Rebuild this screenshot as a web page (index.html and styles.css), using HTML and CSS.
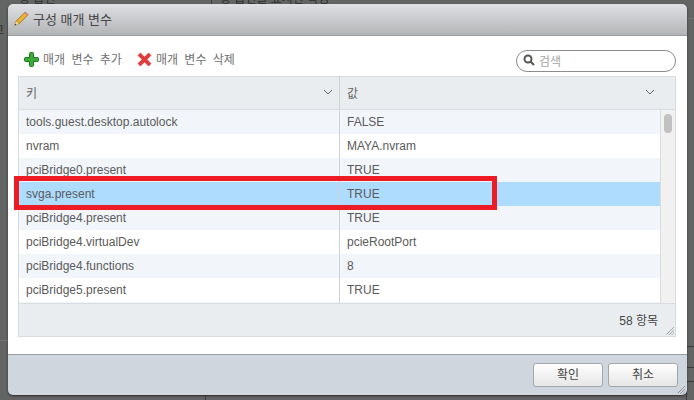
FILE: index.html
```html
<!DOCTYPE html>
<html lang="ko">
<head>
<meta charset="utf-8">
<title>구성 매개 변수</title>
<link rel="stylesheet" href="styles.css">
</head>
<body>
<div class="backdrop">
  <span class="bg-text bg-a">장 옵션</span>
  <span class="bg-text bg-b">장 옵션을 표시한 특정</span>
  <span class="bg-text bg-c">고</span>
  <span class="bg-line bg-v1"></span>
  <span class="bg-line bg-v2"></span>
  <span class="bg-rule bg-r1"></span>
  <span class="bg-rule bg-r2"></span>
  <span class="bg-box bg-b1"></span>
  <span class="bg-box bg-b2"></span>
</div>
<div class="dialog">
  <header class="title">
    <svg class="pencil" width="15" height="15" viewBox="0 0 15 15">
      <path d="M.8 14.200l1-3.700L11.300.9l2.800 2.800-9.600 9.600z" fill="#f0b32e" stroke="#7d6020" stroke-width=".7"/>
      <path d="M3 9.300l2.700 2.700" stroke="#c98a1c" stroke-width=".8"/>
      <path d="M.8 14.200l1-3.700 2.700 2.800z" fill="#f3e2bd"/>
      <path d="M.8 14.200l.5-1.700 1.200 1.200z" fill="#333"/>
      <path d="M11.300.9l2.800 2.800-1.300 1.300L10 2.200z" fill="#d98a7a"/>
    </svg>
    <span>구성 매개 변수</span>
  </header>
  <main class="body">
    <div class="toolbar">
      <div class="action">
        <svg width="15" height="15" viewBox="0 0 15 15"><path d="M5.500 1.500a1 1 0 0 1 1-1h2a1 1 0 0 1 1 1v4h4a1 1 0 0 1 1 1v2a1 1 0 0 1-1 1h-4v4a1 1 0 0 1-1 1h-2a1 1 0 0 1-1-1v-4h-4a1 1 0 0 1-1-1v-2a1 1 0 0 1 1-1h4z" fill="#3cab3a" stroke="#187a1f" stroke-width="1"/></svg>
        <span>매개 변수 추가</span>
      </div>
      <div class="action">
        <svg width="15" height="15" viewBox="0 0 15 15"><path d="M1 3.400L3.400 1l4.100 4.100L11.600 1 14 3.400 9.900 7.500 14 11.600 11.600 14 7.500 9.900 3.400 14 1 11.600l4.100-4.100z" fill="#e23b3b" stroke="#c42a2a" stroke-width=".6"/></svg>
        <span>매개 변수 삭제</span>
      </div>
      <div class="search">
        <svg width="12" height="12" viewBox="0 0 12 12"><circle cx="5" cy="5" r="3.500" fill="none" stroke="#555" stroke-width="2"/><path d="M7.500 7.500l3.500 3.500" stroke="#555" stroke-width="2"/></svg>
        <span>검색</span>
      </div>
    </div>
    <section class="grid">
      <div class="grid-head">
        <div class="head-cell col-key"><span>키</span><svg class="chev" width="10" height="6" viewBox="0 0 10 6"><path d="M1 1l4 4 4-4" fill="none" stroke="#666" stroke-width="1"/></svg></div>
        <div class="head-cell col-val"><span>값</span><svg class="chev" width="10" height="6" viewBox="0 0 10 6"><path d="M1 1l4 4 4-4" fill="none" stroke="#666" stroke-width="1"/></svg></div>
      </div>
      <div class="grid-main">
        <div class="rows">
          <div class="row odd"><div class="cell col-key">tools.guest.desktop.autolock</div><div class="cell col-val">FALSE</div></div>
          <div class="row"><div class="cell col-key">nvram</div><div class="cell col-val">MAYA.nvram</div></div>
          <div class="row odd"><div class="cell col-key">pciBridge0.present</div><div class="cell col-val">TRUE</div></div>
          <div class="row selected"><div class="cell col-key">svga.present</div><div class="cell col-val">TRUE</div></div>
          <div class="row odd"><div class="cell col-key">pciBridge4.present</div><div class="cell col-val">TRUE</div></div>
          <div class="row"><div class="cell col-key">pciBridge4.virtualDev</div><div class="cell col-val">pcieRootPort</div></div>
          <div class="row odd"><div class="cell col-key">pciBridge4.functions</div><div class="cell col-val">8</div></div>
          <div class="row"><div class="cell col-key">pciBridge5.present</div><div class="cell col-val">TRUE</div></div>
          <div class="row odd partial"><div class="cell col-key"></div><div class="cell col-val"></div></div>
        </div>
        <div class="scrollbar"><div class="thumb"></div></div>
      </div>
      <div class="grid-foot">
        <span>58 항목</span>
        <svg class="grip" width="8" height="8" viewBox="0 0 8 8"><path d="M7.500 .5L.5 7.500M7.500 3.500L3.500 7.500M7.500 6L6 7.500" stroke="#666" stroke-width="1" stroke-dasharray="1 .6"/></svg>
      </div>
    </section>
  </main>
  <footer class="foot">
    <button class="btn">확인</button>
    <button class="btn">취소</button>
    <svg class="grip dialog-grip" width="8" height="8" viewBox="0 0 8 8"><path d="M7.500 .5L.5 7.500M7.500 3.500L3.500 7.500M7.500 6L6 7.500" stroke="#666" stroke-width="1" stroke-dasharray="1 .6"/></svg>
  </footer>
</div>
<div class="highlight"></div>
</body>
</html>
```

FILE: styles.css
```css
* { box-sizing: border-box; }
html, body { margin: 0; height: 100%; }
body {
  width: 694px;
  height: 400px;
  overflow: hidden;
  position: relative;
  background: #636464;
  font-family: "Liberation Sans", "Noto Sans CJK KR", sans-serif;
  font-size: 12px;
  color: #565656;
  padding: 4px 7px 5px 8px;
}
.backdrop { position: absolute; inset: 0; overflow: hidden; }
.bg-text { position: absolute; color: #2e2e2e; font-size: 12px; line-height: 14px; white-space: nowrap; }
.bg-a { left: 19px; top: -8px; }
.bg-b { left: 220px; top: -8px; }
.bg-c { left: -7px; top: 24px; }
.bg-line { position: absolute; background: #3c3c3c; width: 1px; }
.bg-v1 { left: 211px; top: 0; height: 5px; }
.bg-v2 { left: 205px; top: 395px; height: 5px; }
.bg-rule { position: absolute; background: #707070; height: 1px; }
.bg-r1 { left: 0; top: 340px; width: 8px; }
.bg-r2 { left: 686px; top: 18px; width: 8px; }
.bg-box { position: absolute; border: 1px solid #3a3a3a; border-radius: 2px; }
.bg-b1 { left: 686px; top: 346px; width: 12px; height: 22px; }
.bg-b2 { left: 686px; top: 381px; width: 12px; height: 22px; }

.dialog {
  position: relative;
  width: 679px;
  height: 391px;
  display: flex;
  flex-direction: column;
  border-radius: 5px;
  overflow: hidden;
  box-shadow: 0 1px 2px #2a2a2a;
}
.title {
  height: 32px;
  flex: none;
  display: flex;
  align-items: center;
  gap: 4px;
  padding: 0 0 2px 6px;
  background: linear-gradient(#dfe0e3, #b2b4b6);
  border-bottom: 1px solid #999b9c;
  font-size: 13px;
  color: #444;
}
.body {
  flex: 1;
  background: #fff;
  padding: 0 10px;
  display: flex;
  flex-direction: column;
}
.toolbar {
  height: 40px;
  flex: none;
  display: flex;
  align-items: flex-end;
  padding: 0 1px 4px 6px;
  gap: 15px;
}
.action { display: flex; align-items: center; gap: 4px; height: 22px; color: #707070; font-size: 12px; word-spacing: 3px; padding-bottom: 6px; }
.action svg { margin-top: 3px; }
.search {
  margin-left: auto;
  width: 160px;
  height: 22px;
  border: 1px solid #8c8c8c;
  border-radius: 11px;
  display: flex;
  align-items: center;
  gap: 4px;
  padding: 0 0 2px 6px;
  color: #a5a5a5;
}
.grid {
  width: 658px;
  height: 261px;
  flex: none;
  border: 1px solid #d9dcdf;
  display: flex;
  flex-direction: column;
  overflow: hidden;
}
.grid-head {
  height: 33px;
  flex: none;
  display: flex;
  background: #e9edf0;
  border-bottom: 1px solid #d9dcdf;
}
.head-cell { display: flex; align-items: center; justify-content: space-between; padding: 0 6px 2px 7px; color: #666; }
.head-cell.col-val { padding-right: 20px; }
.col-key { width: 321px; flex: none; border-right: 1px solid #d0d3d6; }
.col-val { flex: 1; }
.grid-main { flex: 1; min-height: 0; display: flex; overflow: hidden; border-bottom: 1px solid #d9dcdf; }
.rows { flex: 1; min-width: 0; overflow: hidden; }
.row { height: 24px; display: flex; background: #fff; }
.row.odd { background: #f2f6fb; }
.row.selected { background: #aedcff; }
.cell { padding: 0 7px; line-height: 24px; height: 24px; color: #5a5a5a; white-space: nowrap; }
.scrollbar { width: 15px; flex: none; background: #f1f1f1; border-left: 1px solid #dcdcdc; padding: 4px 3px 0 3px; }
.thumb { width: 8px; height: 19px; background: #c1c1c1; border-radius: 4px; }
.grid-foot {
  height: 32px;
  flex: none;
  position: relative;
  background: #e9edf0;
  display: flex;
  align-items: center;
  justify-content: flex-end;
  padding: 0 17px 2px 0;
  color: #444;
}
.grip { position: absolute; right: 1px; bottom: 1px; }
.foot {
  height: 41px;
  flex: none;
  position: relative;
  background: #cfd6de;
  border-top: 1px solid #999b9c;
  display: flex;
  justify-content: flex-end;
  align-items: flex-start;
  gap: 5px;
  padding: 8px 9px 0 0;
}
.btn {
  width: 70px;
  height: 24px;
  padding: 0 0 3px;
  border: 1px solid #a3a7aa;
  border-radius: 3px;
  background: linear-gradient(#fff, #e6e6e6);
  font: inherit;
  color: #444;
}
.dialog-grip { right: 2px; bottom: 1px; }
.highlight {
  position: absolute;
  left: 14px;
  top: 176px;
  width: 483px;
  height: 34px;
  border: 5px solid #ed1c24;
  pointer-events: none;
}
```
